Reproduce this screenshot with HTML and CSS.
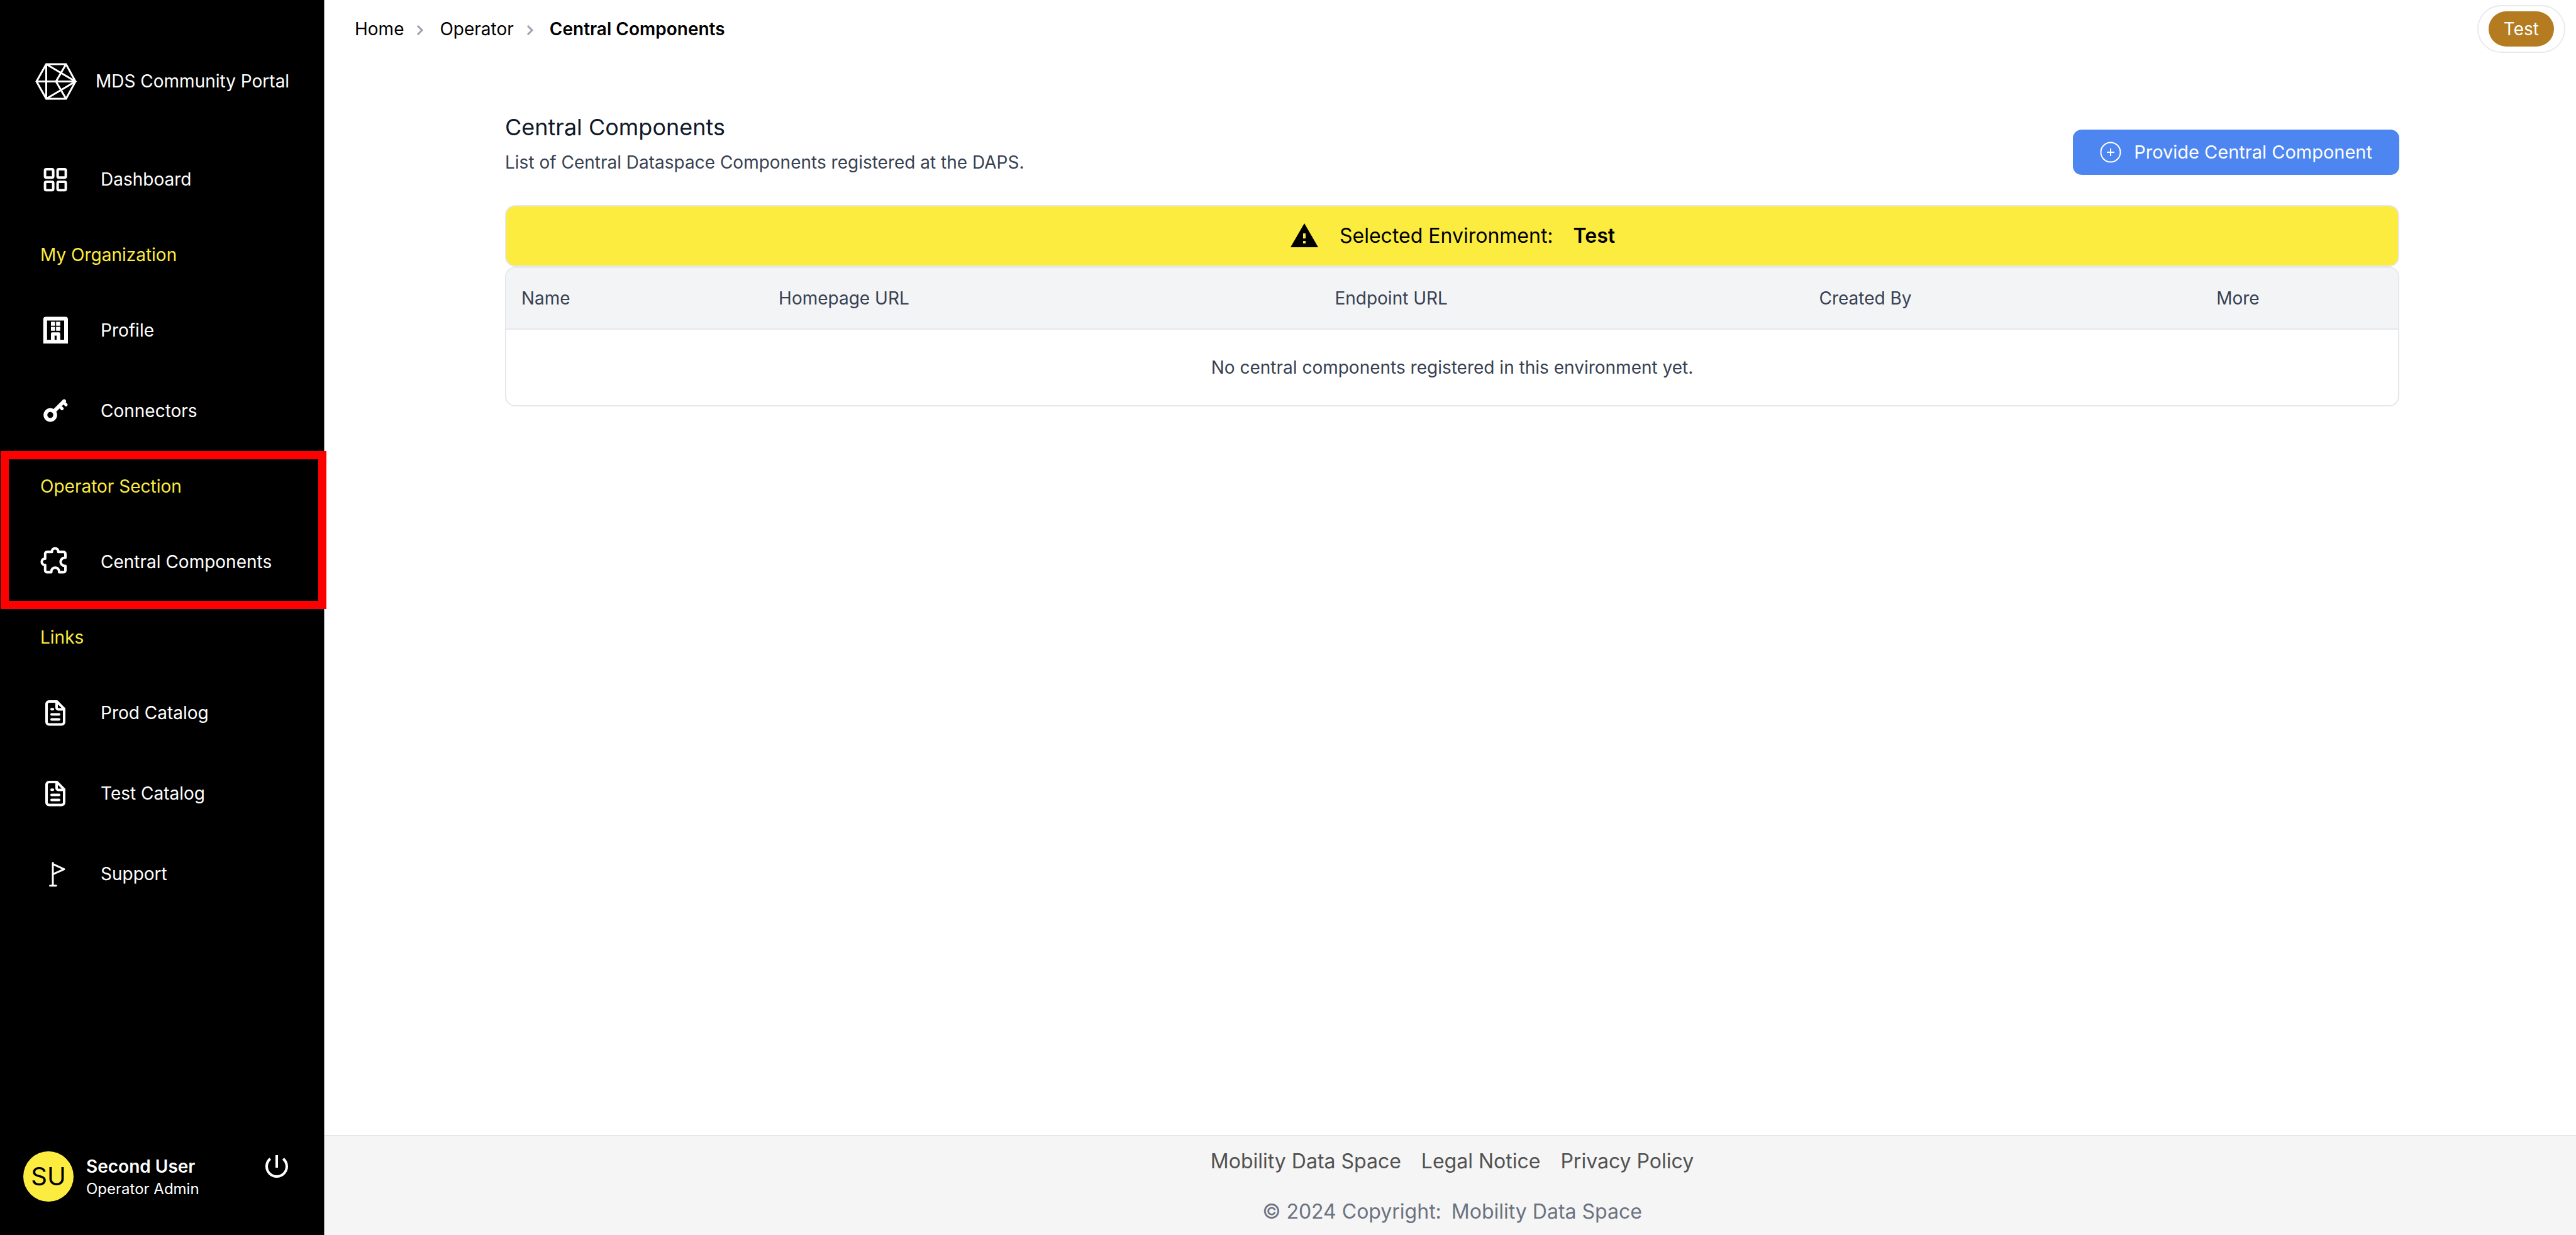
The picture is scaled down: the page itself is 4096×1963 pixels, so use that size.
FILE: index.html
```html
<!DOCTYPE html>
<html lang="en">
<head>
<meta charset="utf-8">
<meta name="viewport" content="width=device-width, initial-scale=1">
<title>Central Components - MDS Community Portal</title>
<link rel="stylesheet" href="styles.css">
</head>
<body>
<div class="app">
  <aside class="sidebar">
    <a class="brand" href="#">
      <svg class="brand-logo" viewBox="0 0 66 59" aria-hidden="true"><path d="M17.5 2H49L64 29.5 49 57H17.5L2 29.5ZM17.5 2V57M2 29.5H64M17.5 2 64 29.5 17.5 57M49 2 33 29.5 49 57"/></svg>
      <span>MDS Community Portal</span>
    </a>
    <nav class="nav">
      <a class="nav-item" href="#">
        <svg class="icon" viewBox="0 0 24 24" aria-hidden="true"><g class="line"><rect x="3.8" y="4" width="6.5" height="6.6" rx="1"/><rect x="13.8" y="4" width="6.5" height="6.6" rx="1"/><rect x="3.8" y="14" width="6.5" height="6.6" rx="1"/><rect x="13.8" y="14" width="6.5" height="6.6" rx="1"/></g></svg>
        Dashboard
      </a>
      <section class="nav-group">
        <h2 class="nav-heading">My Organization</h2>
        <a class="nav-item" href="#">
          <svg class="icon" viewBox="0 0 24 24" aria-hidden="true"><path fill-rule="evenodd" d="M2.4 3.3a2 2 0 0 1 2-2H20a2 2 0 0 1 2 2V22.5H2.4ZM5.4 4.3V19.5H8.5V14.6a1 1 0 0 1 1-1H14.9a1 1 0 0 1 1 1V19.5H19V4.3ZM8.5 5.2H11.8V8.4H8.5ZM12.6 5.2H15.9V8.4H12.6ZM8.5 9.2H11.8V12.4H8.5ZM12.6 9.2H15.9V12.4H12.6ZM11.4 19.5V16.3H13V19.5Z"/></svg>
          Profile
        </a>
        <a class="nav-item" href="#">
          <svg class="icon" viewBox="0 0 24 24" aria-hidden="true"><circle class="heavy" cx="8" cy="15.3" r="3.9"/><path class="heavy" d="M11 12.3 19 4.3"/><path class="tooth" d="M18.2 5 20.5 7.2M15.2 8.2 17.4 10.3"/></svg>
          Connectors
        </a>
      </section>
      <section class="nav-group highlighted">
        <h2 class="nav-heading">Operator Section</h2>
        <a class="nav-item" href="#" aria-current="page">
          <svg class="icon" viewBox="0 0 24 24" aria-hidden="true"><path class="line" d="M5.4 4.1H9.3V3.7a2.5 2.5 0 0 1 5 0V4.1H18.5A1.5 1.5 0 0 1 20 5.6V8.8H19.4a3.2 3.2 0 0 0 0 6.4H20V18.8a1.5 1.5 0 0 1-1.5 1.5H15V19.7a3.1 3.1 0 0 0-6.2 0V20.3H5.4a1.5 1.5 0 0 1-1.5-1.5V14.5H3.7a2.5 2.5 0 0 1 0-5H3.9V5.6A1.5 1.5 0 0 1 5.4 4.1Z"/></svg>
          Central Components
        </a>
      </section>
      <section class="nav-group">
        <h2 class="nav-heading">Links</h2>
        <a class="nav-item" href="#">
          <svg class="icon" viewBox="0 0 24 24" aria-hidden="true"><path class="line" d="M7 3H13.2L19 8.8V19.3a2 2 0 0 1-2 2H7a2 2 0 0 1-2-2V5A2 2 0 0 1 7 3ZM13 3.4V8a1.2 1.2 0 0 0 1.2 1.2H18.6M9 9.1H10.1M9 13.2H15M9 17.3H15"/></svg>
          Prod Catalog
        </a>
        <a class="nav-item" href="#">
          <svg class="icon" viewBox="0 0 24 24" aria-hidden="true"><path class="line" d="M7 3H13.2L19 8.8V19.3a2 2 0 0 1-2 2H7a2 2 0 0 1-2-2V5A2 2 0 0 1 7 3ZM13 3.4V8a1.2 1.2 0 0 0 1.2 1.2H18.6M9 9.1H10.1M9 13.2H15M9 17.3H15"/></svg>
          Test Catalog
        </a>
        <a class="nav-item" href="#">
          <svg class="icon" viewBox="0 0 24 24" aria-hidden="true"><path class="fine" d="M10 3.2V21.4M7.8 21.4H12.6M10 4.2 19 8.3 10 12.3"/></svg>
          Support
        </a>
      </section>
    </nav>
    <div class="account">
      <span class="avatar">SU</span>
      <div class="account-text">
        <strong class="account-name">Second User</strong>
        <span class="account-role">Operator Admin</span>
      </div>
      <button class="logout" type="button" aria-label="Log out">
        <svg class="icon" viewBox="0 0 24 24" aria-hidden="true"><path d="M13 3h-2v10h2V3zm4.83 2.17l-1.42 1.42C17.99 7.86 19 9.81 19 12c0 3.87-3.13 7-7 7s-7-3.13-7-7c0-2.19 1.01-4.14 2.58-5.42L6.17 5.17C4.23 6.82 3 9.26 3 12c0 4.97 4.03 9 9 9s9-4.03 9-9c0-2.74-1.23-5.18-3.17-6.83z"/></svg>
      </button>
    </div>
  </aside>

  <div class="page">
    <header class="topbar">
      <nav class="breadcrumb" aria-label="Breadcrumb">
        <a href="#">Home</a>
        <svg class="chevron" viewBox="0 0 12 18" aria-hidden="true"><path d="M2 2 9 9 2 16"/></svg>
        <a href="#">Operator</a>
        <svg class="chevron" viewBox="0 0 12 18" aria-hidden="true"><path d="M2 2 9 9 2 16"/></svg>
        <a class="current" href="#" aria-current="page">Central Components</a>
      </nav>
      <div class="env-switch"><button class="env-option" type="button">Test</button></div>
    </header>

    <main class="content">
      <div class="content-head">
        <div>
          <h1 class="title">Central Components</h1>
          <p class="subtitle">List of Central Dataspace Components registered at the DAPS.</p>
        </div>
        <button class="primary" type="button">
          <svg class="plus" viewBox="0 0 34 34" aria-hidden="true"><circle cx="17" cy="17" r="15.5"/><path d="M17 11V23M11 17H23"/></svg>
          Provide Central Component
        </button>
      </div>
      <div class="env-banner">
        <svg class="warning" viewBox="0 0 24 24" aria-hidden="true"><path d="M1 21h22L12 2 1 21zm12-3h-2v-2h2v2zm0-4h-2v-4h2v4z"/></svg>
        <span>Selected Environment:</span>
        <strong>Test</strong>
      </div>
      <div class="table-card">
        <table class="components">
          <colgroup><col class="col-name"><col class="col-home"><col class="col-endpoint"><col class="col-created"><col class="col-more"></colgroup>
          <thead>
            <tr><th scope="col">Name</th><th scope="col">Homepage URL</th><th scope="col">Endpoint URL</th><th scope="col">Created By</th><th scope="col">More</th></tr>
          </thead>
          <tbody>
            <tr><td class="empty" colspan="5">No central components registered in this environment yet.</td></tr>
          </tbody>
        </table>
      </div>
    </main>

    <footer class="footer">
      <div class="footer-links">
        <a href="#">Mobility Data Space</a>
        <a href="#">Legal Notice</a>
        <a href="#">Privacy Policy</a>
      </div>
      <p class="copyright"><span>© 2024 Copyright:</span><a href="#">Mobility Data Space</a></p>
    </footer>
  </div>
</div>
</body>
</html>
```
FILE: styles.css
```css
* {
  box-sizing: border-box;
}

body {
  margin: 0;
  font-family: Inter, "Liberation Sans", sans-serif;
  font-size: 28px;
  font-weight: 400;
  line-height: 40px;
  color: #000;
  background: #fff;
}

h1,
h2,
p {
  margin: 0;
  font-weight: inherit;
}

a {
  color: inherit;
  text-decoration: none;
}

button {
  border: 0;
  font: inherit;
  color: inherit;
  cursor: pointer;
}

.app {
  display: flex;
  min-height: 100vh;
}

/* Sidebar */
.sidebar {
  display: flex;
  flex: none;
  flex-direction: column;
  width: 516px;
  border-right: 1px solid #888;
  background: #000;
  color: #fff;
}

.brand {
  display: flex;
  align-items: center;
  gap: 30px;
  height: 221px;
  padding: 37px 0 0 56px;
}

.brand-logo {
  width: 66px;
  height: 59px;
  fill: none;
  stroke: #fff;
  stroke-width: 3;
}

.nav-item {
  display: flex;
  align-items: center;
  gap: 48px;
  height: 128px;
  padding-left: 64px;
}

.nav-heading {
  padding: 36px 64px;
  font-size: inherit;
  color: #fbec3f;
}

.highlighted {
  position: relative;
}

.highlighted::after {
  content: "";
  position: absolute;
  inset: 0 -4px -11px 1px;
  border: 13px solid #f00;
  pointer-events: none;
}

.icon {
  flex: none;
  width: 48px;
  height: 48px;
  fill: currentColor;
}

.line,
.heavy,
.tooth,
.fine {
  fill: none;
  stroke: currentColor;
  stroke-width: 2;
  stroke-linecap: round;
  stroke-linejoin: round;
}

.heavy {
  stroke-width: 3;
}

.tooth {
  stroke-width: 2.5;
}

.fine {
  stroke-width: 1.5;
}

.account {
  display: flex;
  align-items: center;
  margin-top: auto;
  padding: 0 51px 53px 37px;
}

.avatar {
  width: 80px;
  border-radius: 50%;
  background: #fbec3f;
  color: #000;
  font-size: 40px;
  line-height: 80px;
  text-align: center;
}

.account-text {
  display: flex;
  flex: 1;
  flex-direction: column;
  padding-left: 20px;
}

.account-name {
  font-weight: 600;
}

.account-role {
  font-size: 24px;
  line-height: 32px;
}

.logout {
  display: flex;
  align-self: flex-start;
  padding: 0;
  background: none;
}

/* Main column */
.page {
  display: flex;
  flex: 1;
  flex-direction: column;
  min-width: 0;
}

.topbar {
  display: flex;
  align-items: center;
  justify-content: space-between;
  height: 92px;
  padding: 0 17px 0 48px;
}

.breadcrumb {
  display: flex;
  align-items: center;
}

.chevron {
  width: 12px;
  height: 18px;
  margin: 4px 25px 0 20px;
  fill: none;
  stroke: #9ca3af;
  stroke-width: 3;
}

.current {
  font-weight: 600;
}

.env-switch {
  padding: 8px 16px;
  border: 2px solid #e9eaed;
  border-radius: 38px;
}

.env-option {
  display: block;
  padding: 8px 24px;
  border-radius: 28px;
  background: #b57b20;
  color: #fff;
}

.content {
  flex: 1;
  padding: 82px 281px 0 287px;
}

.content-head {
  display: flex;
  align-items: flex-end;
  justify-content: space-between;
  padding-bottom: 48px;
}

.title {
  padding-bottom: 8px;
  font-size: 36px;
  line-height: 56px;
  color: #111827;
}

.subtitle {
  color: #374151;
}

.primary {
  display: flex;
  align-items: center;
  gap: 20px;
  height: 72px;
  padding: 0 43px;
  border-radius: 14px;
  background: #4d85f1;
  color: #fff;
  font-size: 29px;
}

.plus {
  width: 34px;
  height: 34px;
  fill: none;
  stroke: #fff;
  stroke-width: 2;
}

.env-banner {
  display: flex;
  align-items: center;
  justify-content: center;
  gap: 32px;
  height: 98px;
  border: 2px solid #e5e7eb;
  border-radius: 16px;
  background: #fbec3f;
  font-size: 32px;
}

.env-banner strong {
  font-weight: 600;
}

.warning {
  width: 48px;
  height: 48px;
}

.table-card {
  overflow: hidden;
  border: 2px solid #e5e7eb;
  border-radius: 16px;
}

.components {
  width: 100%;
  table-layout: fixed;
  border-collapse: separate;
  border-spacing: 0;
  color: #374151;
}

.col-name { width: 13.6%; }
.col-home { width: 29.4%; }
.col-endpoint { width: 25.6%; }
.col-created { width: 21%; }
.col-more { width: 10.4%; }

.components th {
  padding: 28px 24px;
  border-bottom: 2px solid #e5e7eb;
  background: #f3f4f6;
  font-weight: inherit;
  text-align: left;
}

.components .empty {
  padding: 40px 24px;
  text-align: center;
}

/* Footer */
.footer {
  padding: 20px 0 17px 6px;
  border-top: 2px solid #e5e7eb;
  background: #f5f5f5;
  font-size: 32px;
  color: #525252;
}

.footer-links {
  display: flex;
  justify-content: center;
  gap: 32px;
  padding-bottom: 40px;
}

.copyright {
  display: flex;
  justify-content: center;
  gap: 16px;
  color: #6b7280;
}
```
